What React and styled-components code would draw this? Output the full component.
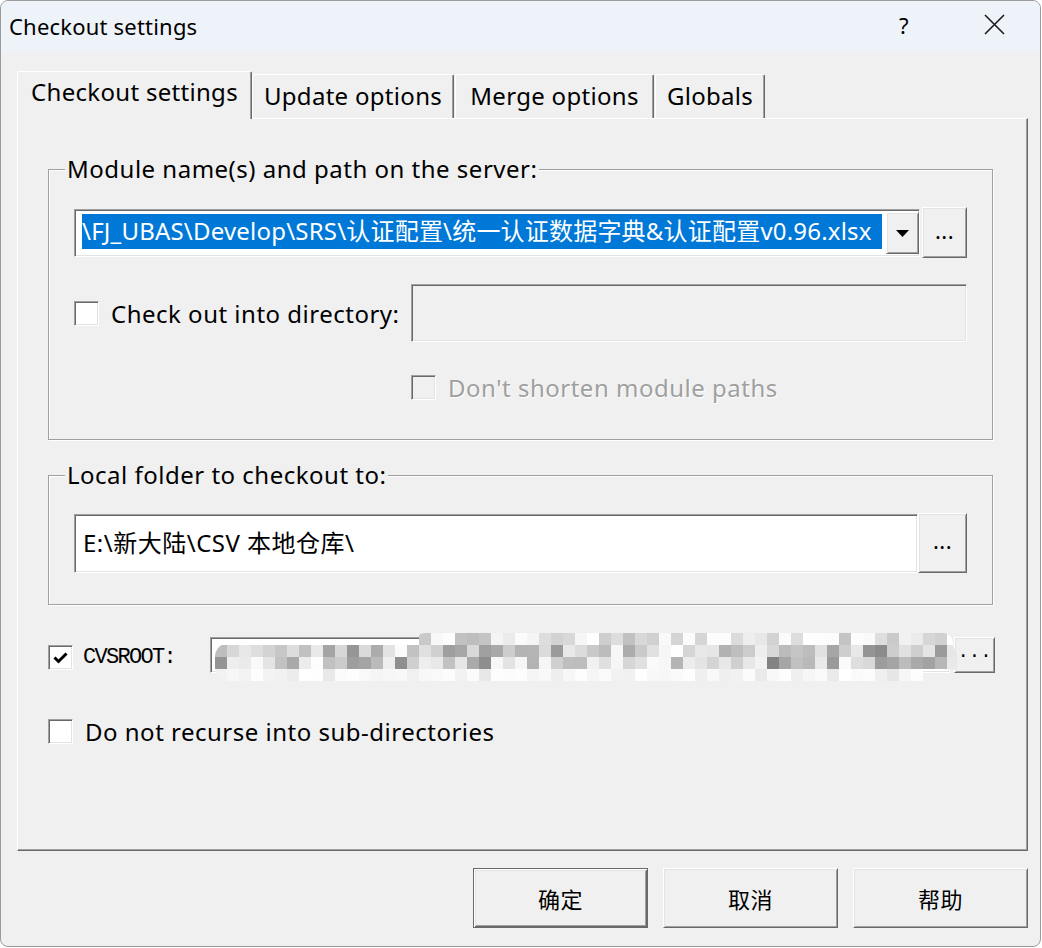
import React from 'react';
import styled, { createGlobalStyle, css } from 'styled-components';

const UI_FONT = `"Noto Sans", "Noto Sans CJK SC", sans-serif`;
const MONO_FONT = `"Liberation Mono", "Noto Sans CJK SC", monospace`;

const Global = createGlobalStyle`
  html, body { margin: 0; padding: 0; background: #ffffff; }
  body { font-family: ${UI_FONT}; font-size: 24px; letter-spacing: 0.5px; color: #000; }
  *, *::before, *::after { box-sizing: border-box; }
`;

const raised = css`
  border: 1px solid;
  border-color: #ffffff #696969 #696969 #ffffff;
  box-shadow: inset 1px 1px 0 #e3e3e3, inset -1px -1px 0 #a0a0a0;
`;

const sunken = css`
  border: 1px solid;
  border-color: #a0a0a0 #ffffff #ffffff #a0a0a0;
  box-shadow: inset 1px 1px 0 #696969, inset -1px -1px 0 #e3e3e3;
`;

const Window = styled.div`
  width: 1041px;
  height: 947px;
  border: 1px solid #9a9a9a;
  border-radius: 8px;
  overflow: hidden;
  background: #f0f0f0;
  display: flex;
  flex-direction: column;
`;

const TitleBar = styled.div`
  height: 51px;
  flex: none;
  background: #eef3f9;
  display: flex;
  align-items: center;
  padding: 0 1px 0 8px;
`;

const Title = styled.span`
  flex: 1;
  font-size: 22px;
  letter-spacing: 0.2px;
  padding-bottom: 1px;
`;

const TitleButton = styled.div`
  width: 90px;
  height: 51px;
  display: flex;
  align-items: center;
  justify-content: center;
  font-size: 22px;
  padding-bottom: 4px;
`;

const Body = styled.div`
  flex: 1;
  display: flex;
  flex-direction: column;
  padding: 19px 12px 0 16px;
`;

const TabStrip = styled.div`
  height: 47px;
  display: flex;
  align-items: flex-end;
  position: relative;
  z-index: 1;
`;

const Tab = styled.div`
  width: ${p => p.$w}px;
  margin-right: ${p => p.$gap || 0}px;
  height: ${p => (p.$active ? 48 : 44)}px;
  margin-bottom: ${p => (p.$active ? -1 : 0)}px;
  background: #f0f0f0;
  border-top: 1px solid #ffffff;
  border-left: 1px solid #ffffff;
  border-right: 1px solid #696969;
  box-shadow: inset -1px 0 0 #a0a0a0;
  border-radius: 2px 2px 0 0;
  display: flex;
  align-items: flex-start;
  justify-content: center;
  padding-top: ${p => (p.$active ? 5 : 6)}px;
  line-height: 30px;
  letter-spacing: 0.3px;
  white-space: nowrap;
`;

const Panel = styled.div`
  height: 733px;
  flex: none;
  border: 1px solid;
  border-color: #ffffff #696969 #696969 #ffffff;
  box-shadow: inset -1px -1px 0 #a0a0a0;
  padding: 37px 34px 0 30px;
  display: flex;
  flex-direction: column;
`;

const Group = styled.fieldset`
  margin: ${p => p.$mt || 0}px 0 0 0;
  padding: 0 25px ${p => p.$pb}px 25px;
  min-width: 0;
  border: 1px solid #a0a0a0;
  box-shadow: inset 1px 1px 0 #ffffff, 1px 1px 0 #ffffff;
`;

const Legend = styled.legend`
  margin-left: -9px;
  padding: 0 2px;
  line-height: 26px;
  height: 26px;
  background: #f0f0f0;
`;

const Row = styled.div`
  display: flex;
  align-items: ${p => p.$align || 'flex-start'};
  margin-top: ${p => p.$mt || 0}px;
  margin-right: ${p => p.$mr || 0}px;
  gap: ${p => p.$gap || 0}px;
  min-width: 0;
`;

const Combo = styled.div`
  ${sunken};
  flex: 1;
  min-width: 0;
  height: 48px;
  margin-top: 1px;
  background: #ffffff;
  display: flex;
  align-items: flex-start;
  padding: 3px 0 0 7px;
`;

const Selection = styled.div`
  flex: 1;
  min-width: 0;
  height: 35px;
  margin-right: 4px;
  margin-top: 1px;
  background: #0078d7;
  color: #ffffff;
  line-height: 34px;
  letter-spacing: 0.2px;
  white-space: nowrap;
  overflow: hidden;
`;

const DropButton = styled.div`
  ${raised};
  width: 33px;
  height: 42px;
  flex: none;
  margin-top: -1px;
  display: flex;
  align-items: center;
  justify-content: center;
  background: #f0f0f0;
`;

const Button = styled.div`
  ${raised};
  width: ${p => p.$w}px;
  height: ${p => p.$h}px;
  flex: none;
  margin-top: ${p => p.$mt || 0}px;
  margin-left: ${p => p.$ml || 0}px;
  background: #f0f0f0;
  display: flex;
  align-items: center;
  justify-content: center;
  font-family: ${p => (p.$mono ? MONO_FONT : UI_FONT)};
  font-size: ${p => (p.$mono ? 19 : 22)}px;
  letter-spacing: ${p => (p.$mono ? '0' : '0.5px')};
  padding-bottom: ${p => p.$pb || 0}px;
  ${p =>
    p.$default &&
    css`
      border: 1px solid #696969;
      box-shadow: inset 1px 1px 0 #ffffff, inset -1px -1px 0 #696969,
        inset 2px 2px 0 #e3e3e3, inset -2px -2px 0 #a0a0a0;
    `}
`;

const CheckGrid = styled.div`
  display: grid;
  grid-template-columns: 337px 1fr;
  row-gap: 33px;
  margin-top: 26px;
  align-items: center;
`;

const TextField = styled.div`
  ${sunken};
  position: relative;
  flex: 1;
  min-width: 0;
  height: ${p => p.$h}px;
  margin-top: ${p => p.$mt || 0}px;
  background: ${p => (p.$disabled ? '#f0f0f0' : '#ffffff')};
  display: flex;
  align-items: center;
  padding: 0 0 4px 8px;
  white-space: nowrap;
`;

const CheckLabel = styled.label`
  display: flex;
  align-items: center;
  gap: ${p => p.$gap || 12}px;
  margin-top: ${p => p.$mt || 0}px;
  color: ${p => (p.$disabled ? '#a0a0a0' : '#000')};
  text-shadow: ${p => (p.$disabled ? '1px 1px 0 #ffffff' : 'none')};
  line-height: 25px;
  white-space: nowrap;
`;

const Box = styled.span`
  ${sunken};
  width: 25px;
  height: 25px;
  flex: none;
  margin-top: ${p => p.$mt || 0}px;
  background: ${p => (p.$disabled ? '#f0f0f0' : '#ffffff')};
  display: flex;
  align-items: center;
  justify-content: center;
`;

const MonoLabel = styled.span`
  width: 137px;
  flex: none;
  font-family: ${MONO_FONT};
  font-size: 22px;
  letter-spacing: -1.7px;
  padding-left: 10px;
  line-height: 25px;
  margin-top: 8px;
`;

const MosaicLayer = styled.svg`
  position: absolute;
  left: 4px;
  top: -5px;
  pointer-events: none;
`;

const ButtonRow = styled.div`
  display: flex;
  justify-content: flex-end;
  gap: 15px;
  margin-top: 17px;
`;

function Checkbox({ checked, disabled, mt }) {
  return (
    <Box $disabled={disabled} $mt={mt}>
      {checked && (
        <svg width="15" height="12" viewBox="0 0 15 12">
          <polyline points="1.5,5.5 5.5,9.5 13.5,1.5" fill="none" stroke="#000" strokeWidth="3" />
        </svg>
      )}
    </Box>
  );
}

function Mosaic() {
  let seed = 12345;
  const rnd = () => {
    seed = (seed * 16807) % 2147483647;
    return seed / 2147483647;
  };
  const rows = [
    { y: 0, x0: 204, x1: 736, lo: 0.72, hi: 1 },
    { y: 12, x0: 0, x1: 740, lo: 0.5, hi: 1 },
    { y: 24, x0: 0, x1: 740, lo: 0.5, hi: 1 },
    { y: 36, x0: 0, x1: 700, lo: 0.9, hi: 1 },
  ];
  const rects = [];
  rows.forEach((r, ri) => {
    for (let x = r.x0; x < r.x1; x += 12) {
      const v = r.lo + (r.hi - r.lo) * Math.pow(rnd(), 0.6);
      const g = Math.round(v * 255);
      rects.push(
        <rect key={`${ri}-${x}`} x={x} y={r.y} width="12" height="12" fill={`rgb(${g},${g},${g})`} />
      );
    }
  });
  return (
    <MosaicLayer width="742" height="48" viewBox="0 0 742 48">
      <defs>
        <clipPath id="blob">
          <rect x="0" y="10" width="742" height="38" rx="14" />
          <rect x="200" y="0" width="538" height="40" rx="10" />
        </clipPath>
      </defs>
      <g clipPath="url(#blob)">{rects}</g>
    </MosaicLayer>
  );
}

export default function App() {
  return (
    <>
      <Global />
      <Window>
        <TitleBar>
          <Title>Checkout settings</Title>
          <TitleButton>?</TitleButton>
          <TitleButton>
            <svg width="21" height="21" viewBox="0 0 21 21">
              <path d="M1 1 L20 20 M20 1 L1 20" stroke="#1b1b1b" strokeWidth="1.6" />
            </svg>
          </TitleButton>
        </TitleBar>
        <Body>
          <TabStrip>
            <Tab $active $w={235}>Checkout settings</Tab>
            <Tab $w={202} $gap={1}>Update options</Tab>
            <Tab $w={199} $gap={1}>Merge options</Tab>
            <Tab $w={110}>Globals</Tab>
          </TabStrip>
          <Panel>
            <Group $pb={39}>
              <Legend>Module name(s) and path on the server:</Legend>
              <Row $mt={26} $gap={2}>
                <Combo>
                  <Selection>\FJ_UBAS\Develop\SRS\认证配置\统一认证数据字典&amp;认证配置v0.96.xlsx</Selection>
                  <DropButton>
                    <svg width="13" height="7" viewBox="0 0 13 7">
                      <polygon points="0,0 13,0 6.5,7" fill="#000" />
                    </svg>
                  </DropButton>
                </Combo>
                <Button $w={45} $h={51} $mt={-1} $pb={6}>...</Button>
              </Row>
              <CheckGrid>
                <CheckLabel>
                  <Checkbox />
                  Check out into directory:
                </CheckLabel>
                <TextField $h={58} $disabled />
                <span />
                <CheckLabel $disabled>
                  <Checkbox disabled />
                  Don't shorten module paths
                </CheckLabel>
              </CheckGrid>
            </Group>

            <Group $mt={22} $pb={31}>
              <Legend>Local folder to checkout to:</Legend>
              <Row $mt={26}>
                <TextField $h={59}>E:\新大陆\CSV 本地仓库\</TextField>
                <Button $w={49} $h={60} $mt={-1} $pb={6}>...</Button>
              </Row>
            </Group>

            <Row $mt={32} $mr={-2} $gap={0}>
              <Checkbox checked mt={8} />
              <MonoLabel>CVSROOT:</MonoLabel>
              <TextField $h={36}>
                <Mosaic />
              </TextField>
              <Button $w={41} $h={36} $ml={4} $mono $pb={6}>...</Button>
            </Row>

            <CheckLabel $mt={46}>
              <Checkbox />
              Do not recurse into sub-directories
            </CheckLabel>
          </Panel>
          <ButtonRow>
            <Button $default $w={175} $h={60}>确定</Button>
            <Button $w={175} $h={60}>取消</Button>
            <Button $w={175} $h={60}>帮助</Button>
          </ButtonRow>
        </Body>
      </Window>
    </>
  );
}
